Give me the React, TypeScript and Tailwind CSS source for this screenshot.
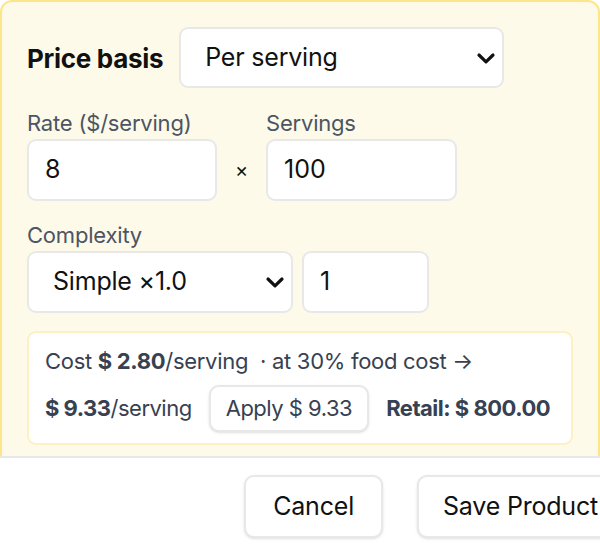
import React from "react";

function Chevron() {
  return (
    <svg width="20" height="20" viewBox="0 0 20 20" fill="none">
      <path d="M3 7 L10 13.8 L17 7" stroke="#111" strokeWidth="3.2" strokeLinecap="round" strokeLinejoin="round" />
    </svg>
  );
}

export default function App() {
  return (
    <div
      className="w-[600px] h-[554px] overflow-hidden bg-white flex flex-col text-[#111827]"
      style={{ fontFamily: "Inter, 'Noto Sans', sans-serif" }}
    >
      <div className="h-[456px] overflow-hidden shrink-0">
        <div className="rounded-[12px] border-2 border-[#fde68a] bg-[#fefae9] px-[25px] pt-[25px] pb-[30px]">
          <div className="flex items-center gap-[16px]">
            <span className="text-[26px] font-bold tracking-[-0.3px] text-[#111] leading-[34px] pt-[2px]">Price basis</span>
            <div className="w-[325px] h-[61px] rounded-[9px] border-2 border-[#e8e8e8] bg-white flex items-center justify-between pl-[24px] pr-[6px]">
              <span className="text-[25px] text-[#111] tracking-[-0.2px]">Per serving</span>
              <Chevron />
            </div>
          </div>

          <div className="mt-[19px] grid w-fit grid-cols-[190px_17px_191px] gap-x-[16px] items-center">
            <span className="text-[22px] text-[#4b5563] leading-[32px] tracking-[-0.2px]">Rate ($/serving)</span>
            <span></span>
            <span className="text-[22px] text-[#4b5563] leading-[32px] tracking-[-0.2px]">Servings</span>
            <div className="h-[62px] rounded-[9px] border-2 border-[#e8e8e8] bg-white flex items-center pl-[16px] text-[25px] text-[#111]">8</div>
            <span className="text-[20px] text-[#111] text-center">×</span>
            <div className="h-[62px] rounded-[9px] border-2 border-[#e8e8e8] bg-white flex items-center pl-[16px] text-[25px] text-[#111]">100</div>
          </div>

          <div className="mt-[18px] flex flex-col">
            <span className="text-[22px] text-[#4b5563] leading-[32px] tracking-[-0.2px]">Complexity</span>
            <div className="flex gap-[9px]">
              <div className="w-[266px] h-[62px] rounded-[9px] border-2 border-[#e8e8e8] bg-white flex items-center justify-between pl-[24px] pr-[6px]">
                <span className="text-[25px] text-[#111] tracking-[-0.2px]">Simple ×1.0</span>
                <Chevron />
              </div>
              <div className="w-[127px] h-[62px] rounded-[9px] border-2 border-[#e8e8e8] bg-white flex items-center pl-[16px] text-[25px] text-[#111]">1</div>
            </div>
          </div>

          <div className="mt-[18px] rounded-[9px] border-2 border-[#fdf1c4] bg-white px-[16px] pt-[10px] pb-[11px] text-[#374151] text-[22px] tracking-[-0.3px] whitespace-nowrap">
            <div className="leading-[36px]">
              Cost <span className="font-bold">$ 2.80</span>/serving
              <span className="ml-[12px]">· at 30% food cost →</span>
            </div>
            <div className="mt-[6px] flex items-center gap-[17px] tracking-[-0.5px]">
              <span className="shrink-0">
                <span className="font-bold">$ 9.33</span>/serving
              </span>
              <div className="shrink-0 h-[47px] px-[15px] rounded-[10px] border-2 border-[#e8e8e8] bg-white shadow-sm flex items-center">
                Apply $ 9.33
              </div>
              <span className="shrink-0 font-bold">Retail: $ 800.00</span>
            </div>
          </div>
        </div>
      </div>

      <div className="flex-1 border-t-2 border-[#e5e7eb] bg-white">
        <div className="w-[650px] flex justify-end gap-[34px] pr-[26px] pt-[17px]">
          <div className="h-[63px] px-[27px] rounded-[10px] border-2 border-[#e8e8e8] bg-white shadow-sm flex items-center text-[25px] text-[#111] tracking-[-0.2px]">
            Cancel
          </div>
          <div className="h-[63px] px-[24px] rounded-[10px] border-2 border-[#e8e8e8] bg-white shadow-sm flex items-center text-[25px] text-[#111] tracking-[-0.2px]">
            Save Product
          </div>
        </div>
      </div>
    </div>
  );
}
